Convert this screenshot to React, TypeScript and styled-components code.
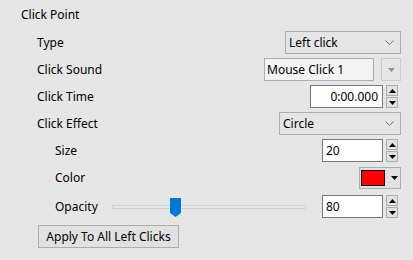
import styled, { createGlobalStyle } from 'styled-components';

const Global = createGlobalStyle`
  html, body {
    margin: 0;
    padding: 0;
    background: #e6e6e6;
  }
  body {
    font-family: 'Noto Sans', 'Open Sans', sans-serif;
    font-size: 12px;
    color: #000;
  }
`;

const Panel = styled.div`
  width: 413px;
  height: 260px;
  box-sizing: border-box;
  padding: 7px 12px 0 0;
  background: #e6e6e6;
`;

const Title = styled.div`
  padding-left: 21px;
  line-height: 16px;
  height: 22px;
`;

const Row = styled.div<{ $indent: number; $h?: number }>`
  display: flex;
  align-items: center;
  justify-content: space-between;
  height: ${(p) => p.$h ?? 27}px;
  padding-left: ${(p) => p.$indent}px;
`;

const Label = styled.span<{ $w?: number }>`
  line-height: 16px;
  flex: none;
  ${(p) => (p.$w ? `width: ${p.$w}px;` : '')}
`;

const Combo = styled.div<{ $w: number }>`
  width: ${(p) => p.$w}px;
  height: 23px;
  box-sizing: border-box;
  border: 1px solid #adadad;
  background: #e5e5e5;
  display: flex;
  align-items: center;
  justify-content: space-between;
  padding: 0 6px 0 3px;
`;

const ComboEdit = styled.div`
  display: flex;
  align-items: center;
  gap: 7px;
`;

const EditBox = styled.div`
  width: 110px;
  height: 23px;
  box-sizing: border-box;
  border: 1px solid #adadad;
  background: #f3f3f3;
  display: flex;
  align-items: center;
  padding-left: 2px;
`;

const DropBtn = styled.div`
  width: 20px;
  height: 23px;
  box-sizing: border-box;
  border: 1px solid #cccccc;
  background: #e6e6e6;
  display: flex;
  align-items: center;
  justify-content: center;
`;

const SpinGroup = styled.div`
  display: flex;
  align-items: center;
  gap: 3px;
  margin-right: 3px;
`;

const NumInput = styled.div<{ $w: number; $right?: boolean }>`
  width: ${(p) => p.$w}px;
  height: 23px;
  box-sizing: border-box;
  border: 1px solid #7a7a7a;
  background: #fff;
  display: flex;
  align-items: center;
  justify-content: ${(p) => (p.$right ? 'flex-end' : 'flex-start')};
  padding: 0 4px 0 3px;
`;

const Spin = styled.div`
  display: flex;
  flex-direction: column;
  gap: 1px;
`;

const SpinBtn = styled.div`
  width: 12px;
  height: 11px;
  box-sizing: border-box;
  border: 1px solid #adadad;
  background: #e1e1e1;
  display: flex;
  align-items: center;
  justify-content: center;
`;

const ColorBtn = styled.div`
  width: 42px;
  height: 22px;
  box-sizing: border-box;
  border: 1px solid #adadad;
  background: #e1e1e1;
  display: flex;
  align-items: center;
  padding-left: 1px;
  gap: 6px;
`;

const Swatch = styled.div<{ $c: string }>`
  width: 24px;
  height: 16px;
  box-sizing: border-box;
  border: 1px solid #000;
  background: ${(p) => p.$c};
`;

const Slider = styled.div`
  flex: 1;
  position: relative;
  height: 20px;
  margin-right: 16px;
  display: flex;
  align-items: center;
`;

const Track = styled.div`
  width: 100%;
  height: 4px;
  box-sizing: border-box;
  border: 1px solid #d4d4d4;
  background: #e8e8e8;
`;

const Thumb = styled.svg`
  position: absolute;
  top: 1px;
`;

const Button = styled.div`
  margin-left: 38px;
  margin-top: 4px;
  width: 141px;
  height: 23px;
  box-sizing: border-box;
  border: 1px solid #adadad;
  background: #e1e1e1;
  display: flex;
  align-items: center;
  justify-content: center;
`;

const Chevron = () => (
  <svg width="9" height="5" viewBox="0 0 9 5">
    <polyline points="0.5,0.5 4.5,4.5 8.5,0.5" fill="none" stroke="#707070" strokeWidth="1" />
  </svg>
);

const Tri = ({ up, color = '#000' }: { up?: boolean; color?: string }) => (
  <svg width="7" height="4" viewBox="0 0 7 4">
    <polygon points={up ? '0,4 7,4 3.5,0' : '0,0 7,0 3.5,4'} fill={color} />
  </svg>
);

const Spinner = () => (
  <Spin>
    <SpinBtn>
      <Tri up />
    </SpinBtn>
    <SpinBtn>
      <Tri />
    </SpinBtn>
  </Spin>
);

// slider position in px along the track (value range 0..255-ish in the original app)
const thumbPos = (v: number) => Math.round((v / 255) * 184);

export default function App() {
  const opacity = 80;
  return (
    <Panel>
      <Global />
      <Title>Click Point</Title>
      <Row $indent={37}>
        <Label>Type</Label>
        <Combo $w={116}>
          <span>Left click</span>
          <Chevron />
        </Combo>
      </Row>
      <Row $indent={37}>
        <Label>Click Sound</Label>
        <ComboEdit>
          <EditBox>Mouse Click 1</EditBox>
          <DropBtn>
            <Tri color="#909090" />
          </DropBtn>
        </ComboEdit>
      </Row>
      <Row $indent={37}>
        <Label>Click Time</Label>
        <SpinGroup>
          <NumInput $w={73} $right>
            0:00.000
          </NumInput>
          <Spinner />
        </SpinGroup>
      </Row>
      <Row $indent={37}>
        <Label>Click Effect</Label>
        <Combo $w={122}>
          <span>Circle</span>
          <Chevron />
        </Combo>
      </Row>
      <Row $indent={55}>
        <Label>Size</Label>
        <SpinGroup>
          <NumInput $w={61}>20</NumInput>
          <Spinner />
        </SpinGroup>
      </Row>
      <Row $indent={55} $h={28}>
        <Label>Color</Label>
        <ColorBtn>
          <Swatch $c="#ff0000" />
          <Tri />
        </ColorBtn>
      </Row>
      <Row $indent={55} $h={29}>
        <Label $w={57}>Opacity</Label>
        <Slider>
          <Track />
          <Thumb width="11" height="19" viewBox="0 0 11 19" style={{ left: `${thumbPos(opacity)}px` }}>
            <polygon points="0,0 11,0 11,15 5.5,19 0,15" fill="#0078d7" />
          </Thumb>
        </Slider>
        <SpinGroup>
          <NumInput $w={61}>{opacity}</NumInput>
          <Spinner />
        </SpinGroup>
      </Row>
      <Button>Apply To All Left Clicks</Button>
    </Panel>
  );
}
